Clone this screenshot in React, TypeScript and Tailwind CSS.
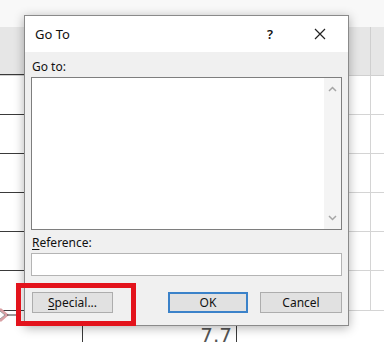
import React from 'react';

const font = { fontFamily: '"Noto Sans", "Open Sans", sans-serif' };

const Row = () => (
  <div className="flex h-[39px]">
    <div className="w-[24px] border-b border-[#3a3a3a]" />
    <div className="flex-1" />
    <div className="flex w-[35px] border-b border-[#d4d4d4]">
      <div className="w-[22px] border-r border-[#d4d4d4]" />
    </div>
  </div>
);

const Button = ({ children, primary, width }: { children: React.ReactNode; primary?: boolean; width: string }) => (
  <div
    className={`${width} flex h-[21px] items-center justify-center bg-[#e1e1e1] text-[12px] text-[#111] ${
      primary ? 'border-2 border-[#3b82c9]' : 'border border-[#adadad]'
    }`}
  >
    {children}
  </div>
);

export default function App() {
  return (
    <div className="relative h-[342px] w-[384px] overflow-hidden bg-white" style={font}>
      {/* spreadsheet behind the dialog */}
      <div className="flex flex-col">
        <div className="h-[27px] bg-[#f8f8f8]" />
        <div className="flex h-[49px] border-b border-[#d0d0d0] bg-[#e6e6e6]">
          <div className="w-[24px] border-b border-[#3a3a3a]" />
          <div className="flex-1" />
          <div className="flex w-[35px]">
            <div className="w-[22px] border-r border-[#cfcfcf]" />
          </div>
        </div>
        <Row />
        <Row />
        <Row />
        <Row />
        <Row />
        <div className="flex h-[40px]">
          <div className="w-[24px] border-b border-[#3a3a3a]" />
          <div className="flex-1" />
          <div className="flex w-[35px] border-b border-[#d4d4d4]">
            <div className="w-[22px] border-r border-[#d4d4d4]" />
          </div>
        </div>
        <div className="flex h-[40px]">
          <div className="w-[83px] border-r border-[#3a3a3a]" />
          <div className="flex w-[154px] items-start justify-end border-r border-[#3a3a3a] pr-[4px] pt-[14px]">
            <span className="text-[20px] leading-[20px] text-[#555]" style={{ fontFamily: '"DejaVu Sans", sans-serif' }}>
              7.7
            </span>
          </div>
          <div className="flex-1" />
        </div>
      </div>

      {/* Go To dialog */}
      <div className="absolute left-[24px] top-[15px] flex h-[311px] w-[325px] flex-col border border-[#8a8a8a] bg-[#f0f0f0] shadow-[0_2px_10px_rgba(0,0,0,0.3)]">
        <div className="flex h-[36px] items-center bg-white pl-[10px] text-[13px] text-[#111]">
          <span className="flex-1 pt-[2px]">Go To</span>
          <span className="w-[20px] pt-[2px] text-center text-[13px] font-semibold">?</span>
          <div className="flex w-[68px] items-center justify-center">
            <svg width="12" height="12" viewBox="0 0 12 12" className="ml-[12px]">
              <path d="M1 1 L11 11 M11 1 L1 11" stroke="#222" strokeWidth="1.2" />
            </svg>
          </div>
        </div>

        <div className="flex flex-1 flex-col px-[6px] pt-[7px]">
          <div className="pl-[1px] text-[12px] leading-[16px] text-[#111]">Go to:</div>
          <div className="mt-[2px] flex h-[153px] border border-[#7e7e7e] bg-white">
            <div className="flex-1" />
            <div className="flex w-[17px] flex-col items-center justify-between bg-[#f4f4f4] py-[8px]">
              <svg width="9" height="6" viewBox="0 0 9 6">
                <path d="M1 5 L4.5 1.5 L8 5" fill="none" stroke="#a6a6a6" strokeWidth="1.5" />
              </svg>
              <svg width="9" height="6" viewBox="0 0 9 6">
                <path d="M1 1 L4.5 4.5 L8 1" fill="none" stroke="#a6a6a6" strokeWidth="1.5" />
              </svg>
            </div>
          </div>
          <div className="mt-[5px] pl-[1px] text-[12px] leading-[16px] text-[#111]">
            <span className="underline underline-offset-2">R</span>eference:
          </div>
          <div className="mt-[2px] h-[23px] border border-[#b4b4b4] bg-white" />
          <div className="mt-[16px] flex gap-[12px] pl-[1px]">
            <Button width="w-[84px]">
              <span className="underline underline-offset-2">S</span>pecial...
            </Button>
            <div className="w-[32px]" />
            <Button width="w-[83px]" primary>
              OK
            </Button>
            <Button width="w-[85px]">Cancel</Button>
          </div>
        </div>
      </div>

      {/* red highlight around Special... */}
      <div className="absolute left-[16px] top-[283px] h-[43px] w-[120px] border-[5px] border-[#e3131c]" />

      {/* callout arrow tip */}
      <svg className="absolute left-0 top-[306px]" width="16" height="18" viewBox="0 0 16 18">
        <path d="M0 3 L7 9 L0 15" fill="none" stroke="#d9a0a4" strokeWidth="2.5" />
        <path d="M0 5 L5 9 L0 13" fill="none" stroke="#9a9a9a" strokeWidth="1" />
        <path d="M7 9 L16 9" stroke="#3a3a3a" strokeWidth="1" />
      </svg>
    </div>
  );
}
